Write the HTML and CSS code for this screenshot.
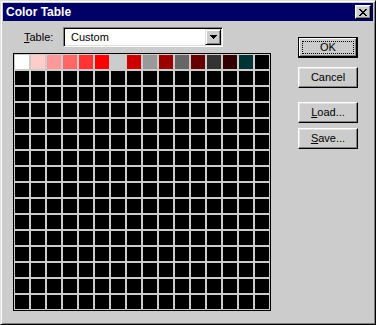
FILE: index.html
```html
<!DOCTYPE html>
<html lang="en">
  <head>
    <meta charset="UTF-8" />
    <meta name="viewport" content="width=device-width, initial-scale=1.0" />
    <title>Color Table</title>
    <link rel="stylesheet" href="styles.css">
  </head>
  <body>
    <div class="dialog">
      <div class="titlebar">
        <span class="title">Color Table</span>
        <button type="button" class="close-btn" aria-label="Close">
          <svg width="8" height="7" viewBox="0 0 8 7" shape-rendering="crispEdges">
            <path fill="#000" d="M0 0h2v1H0zM6 0h2v1H6zM1 1h2v1H1zM5 1h2v1H5zM2 2h4v1H2zM3 3h2v1H3zM2 4h4v1H2zM1 5h2v1H1zM5 5h2v1H5zM0 6h2v1H0zM6 6h2v1H6z" />
          </svg>
        </button>
      </div>

      <div class="body">
        <div class="main">
          <div class="table-row">
            <label for="tableSelect"><u>T</u>able:</label>
            <div class="combo" id="tableSelect">
              <span class="combo-text">Custom</span>
              <span class="combo-btn">
                <svg width="7" height="4" viewBox="0 0 7 4" shape-rendering="crispEdges">
                  <path fill="#000" d="M0 0h7v1H0zM1 1h5v1H1zM2 2h3v1H2zM3 3h1v1H3z" />
                </svg>
              </span>
            </div>
          </div>

          <div class="swatches">
            <div class="swatch-grid" id="swatchGrid"></div>
          </div>
        </div>

        <div class="actions">
          <button type="button" class="btn btn-default">OK</button>
          <button type="button" class="btn btn-cancel">Cancel</button>
          <button type="button" class="btn btn-load"><u>L</u>oad...</button>
          <button type="button" class="btn btn-save"><u>S</u>ave...</button>
        </div>
      </div>
    </div>

    <script>
      const firstRow = [
        "#ffffff", "#ffcccc", "#ff9999", "#ff6666",
        "#ff3333", "#ff0000", "#cccccc", "#cc0000",
        "#999999", "#990000", "#666666", "#660000",
        "#333333", "#330000", "#003333", "#000000",
      ];
      const grid = document.getElementById("swatchGrid");

      for (let i = 0; i < 256; i++) {
        const cell = document.createElement("div");
        cell.className = "swatch";
        if (i < firstRow.length) {
          cell.style.background = firstRow[i];
        }
        grid.appendChild(cell);
      }
    </script>
  </body>
</html>
```

FILE: styles.css
```css
body {
  margin: 0;
  font-family: "Liberation Sans", Arial, sans-serif;
  font-size: 11px;
  color: #000;
  background-color: #ffffff;
}
.dialog {
  width: 376px;
  height: 325px;
  box-sizing: border-box;
  padding: 2px;
  background-color: #cccccc;
  border: 1px solid;
  border-color: #dfdfdf #000 #000 #dfdfdf;
  box-shadow: inset 1px 1px #fff, inset -1px -1px #808080;
}
.titlebar {
  height: 18px;
  display: flex;
  align-items: center;
  justify-content: space-between;
  padding: 0 2px 0 3px;
  background-color: #000066;
  color: #fff;
}
.title {
  font-size: 12px;
  font-weight: bold;
  line-height: 18px;
}
.close-btn {
  width: 16px;
  height: 14px;
  box-sizing: border-box;
  padding: 0;
  display: flex;
  align-items: center;
  justify-content: center;
  background-color: #cccccc;
  border: 1px solid;
  border-color: #fff #000 #000 #fff;
  box-shadow: inset -1px -1px #808080, inset 1px 1px #dfdfdf;
}
.body {
  display: flex;
}
.main {
  padding: 6px 0 0 10px;
}
.table-row {
  display: flex;
  align-items: center;
  padding-left: 11px;
}
.table-row label {
  width: 39px;
}
.combo {
  width: 160px;
  height: 20px;
  box-sizing: border-box;
  padding: 1px;
  display: flex;
  align-items: center;
  background-color: #fff;
  border: 1px solid;
  border-color: #808080 #fff #fff #808080;
  box-shadow: inset 1px 1px #000, inset -1px -1px #dfdfdf;
}
.combo-text {
  flex: 1;
  padding-left: 6px;
}
.combo-btn {
  width: 16px;
  height: 16px;
  box-sizing: border-box;
  display: flex;
  align-items: center;
  justify-content: center;
  background-color: #cccccc;
  border: 1px solid;
  border-color: #dfdfdf #000 #000 #dfdfdf;
  box-shadow: inset 1px 1px #fff, inset -1px -1px #808080;
}
.swatches {
  width: fit-content;
  margin-top: 6px;
  padding: 1px;
  border: 1px solid #000;
  background-color: #cccccc;
}
.swatch-grid {
  display: grid;
  grid-template-columns: repeat(16, 14px);
  grid-auto-rows: 14px;
  gap: 2px;
  background-color: #cccccc;
}
.swatch {
  background-color: #000;
}
.actions {
  display: flex;
  flex-direction: column;
  margin-left: 27px;
  padding-top: 16px;
}
.btn {
  position: relative;
  width: 60px;
  height: 21px;
  box-sizing: border-box;
  padding: 0 0 1px;
  font-family: inherit;
  font-size: 11px;
  color: #000;
  background-color: #cccccc;
  border: 1px solid;
  border-color: #fff #000 #000 #fff;
  box-shadow: inset -1px -1px #808080, inset 1px 1px #dfdfdf;
}
.btn-default {
  border-color: #000;
  box-shadow: inset -1px -1px #000, inset 1px 1px #fff, inset -2px -2px #808080;
}
.btn-default::after {
  content: "";
  position: absolute;
  inset: 3px;
  border: 1px dotted #000;
}
.btn-cancel {
  margin-top: 9px;
}
.btn-load {
  margin-top: 14px;
}
.btn-save {
  margin-top: 5px;
}
```
